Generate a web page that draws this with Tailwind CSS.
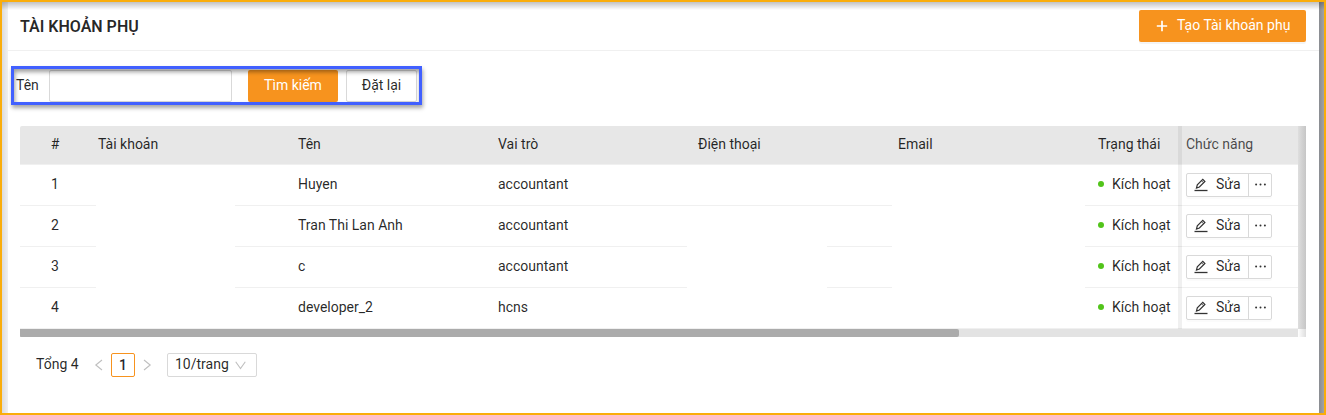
<!DOCTYPE html>
<html lang="vi">
<head>
<meta charset="utf-8">
<title>Tài khoản phụ</title>
<script src="https://cdn.jsdelivr.net/npm/@tailwindcss/browser@4"></script>
</head>
<body class="bg-white">
<div class="relative w-[1326px] h-[415px] overflow-hidden border-2 border-[#faad0a] flex font-['Roboto',sans-serif] text-sm leading-[22px] text-black/85">
  <div class="w-[6px] shrink-0 bg-linear-to-r from-[#dcdcdc] to-[#f0f0f0]"></div>
  <main class="w-[1311px] shrink-0 bg-white">
    <header class="h-[49px] border-b border-[#f0f0f0] flex items-start justify-between pl-3 pr-[13px]">
      <h1 class="text-base font-semibold leading-6 mt-[13px]">TÀI KHOẢN PHỤ</h1>
      <button class="mt-2 w-[167px] h-8 rounded-[2px] bg-[#f7931e] text-white flex items-center pl-[17px] shadow-[0_2px_0_rgba(0,0,0,0.045)]">
        <svg class="w-3 h-3 mr-[9px]" viewBox="0 0 12 12" stroke="currentColor" stroke-width="1.7"><path d="M6 .8v10.4M.8 6h10.4"/></svg>
        <span class="pb-[3px]">Tạo Tài khoản phụ</span>
      </button>
    </header>
    <form class="relative ml-[3px] mt-[15px] w-[411px] h-[39px] border-3 border-[#4160ff] flex pt-[1px] pl-[2px] shadow-[1px_3px_4px_rgba(0,0,0,0.35)]">
      <label class="w-[33px] leading-8 -mt-px">Tên</label>
      <input class="w-[183px] h-8 border border-[#d9d9d9] rounded-[2px] outline-none">
      <button type="button" class="ml-4 w-[90px] h-8 rounded-[2px] bg-[#f7931e] text-white pb-[2px]">Tìm kiếm</button>
      <button type="button" class="ml-2 w-[71px] h-8 rounded-[2px] border border-[#d9d9d9] pb-[2px]">Đặt lại</button>
      <span class="absolute inset-0 pointer-events-none shadow-[inset_1px_3px_4px_rgba(0,0,0,0.38)]"></span>
    </form>
    <section class="ml-3 mt-[21px] w-[1286px]">
      <div class="flex">
        <div class="w-[1278px] relative">
          <div class="h-[39px] bg-[#e7e7e7] border-b border-[#f0f0f0] rounded-tl-[2px] flex items-center pb-[2px]">
            <span class="w-[71px] text-center pr-px">#</span><span class="w-[200px] pl-[7px]">Tài khoản</span><span class="w-[200px] pl-[7px]">Tên</span><span class="w-[200px] pl-[7px]">Vai trò</span><span class="w-[200px] pl-[7px]">Điện thoại</span><span class="w-[200px] pl-[7px]">Email</span><span class="w-[91px] pl-[7px] whitespace-nowrap">Trạng thái</span><span class="pl-[4px] text-black/70">Chức năng</span>
          </div>
          <div id="rows"></div>
          <span class="absolute left-[1158px] top-0 w-1 h-[203px] bg-black/6"></span>
        </div>
        <div class="w-2 h-[203px] bg-linear-to-r from-[#dedede] to-[#c6c6c6]"></div>
      </div>
      <div class="flex h-2"><div class="w-[1278px] bg-[#e3e3e3]"><div class="w-[939px] h-2 rounded-r-[2px] rounded-bl-[1px] bg-[#ababab]"></div></div><div class="w-2 bg-linear-to-r from-white to-[#dedede]"></div></div>
    </section>
    <footer class="mt-4 pl-7 flex h-6 leading-[22px]">
      <span class="w-[58px]">Tổng 4</span>
      <svg class="w-[9px] h-3 mt-[6px]" viewBox="0 0 9 12" fill="none" stroke="#bfbfbf" stroke-width="1.1"><path d="M8 1L1.8 6L8 11"/></svg>
      <span class="ml-2 w-6 h-6 border border-[#f7931e] rounded-[2px] text-center font-medium">1</span>
      <svg class="w-[9px] h-3 mt-[6px] ml-2" viewBox="0 0 9 12" fill="none" stroke="#bfbfbf" stroke-width="1.1"><path d="M1 1L7.2 6L1 11"/></svg>
      <span class="ml-[15px] w-[90px] h-6 border border-[#d9d9d9] rounded-[2px] pl-[7px] flex leading-5">10/trang
        <svg class="w-[11px] h-[9px] ml-[6px] mt-[7px]" viewBox="0 0 11 9" fill="none" stroke="#bfbfbf" stroke-width="1.1"><path d="M.7.8L5.5 7.5L10.3.8"/></svg></span>
    </footer>
  </main>
  <div class="w-[5px] shrink-0 bg-linear-to-r from-[#898c91] to-[#a1a3a7]"></div>
  <span class="absolute left-0 top-0 w-full h-[8px] bg-linear-to-b from-black/24 to-transparent pointer-events-none"></span>
</div>
<script>
const data = [['Huyen','accountant'],['Tran Thi Lan Anh','accountant'],['c','accountant'],['developer_2','hcns']];
const line = 'bg-[#f0f0f0]';
const full = `<div class="flex h-px"><i class="w-[76px] ${line}"></i><i class="w-[139px]"></i><i class="w-[637px] ${line}"></i><i class="w-[20px] ${line}"></i><i class="w-[193px]"></i><i class="grow ${line}"></i></div>`;
const split = `<div class="flex h-px"><i class="w-[76px] ${line}"></i><i class="w-[139px]"></i><i class="w-[452px] ${line}"></i><i class="w-[140px]"></i><i class="w-[65px] ${line}"></i><i class="w-[193px]"></i><i class="grow ${line}"></i></div>`;
const last = `<div class="h-px bg-[#f0f0f0]"></div>`;
document.getElementById('rows').innerHTML = data.map((d, i) => `
<div class="h-10 flex items-center">
  <span class="w-[70px] text-center pb-[2px]">${i + 1}</span>
  <span class="w-[201px]"></span>
  <span class="w-[200px] pl-[7px] pb-[2px]">${d[0]}</span>
  <span class="w-[200px] pl-[7px] pb-[2px]">${d[1]}</span>
  <span class="w-[400px]"></span>
  <span class="w-[95px] pl-[7px] pb-[2px] flex items-center whitespace-nowrap"><i class="w-1.5 h-1.5 rounded-full bg-[#52c41a] mr-2"></i>Kích hoạt</span>
  <span class="flex h-6 border border-[#d9d9d9] rounded-[2px] w-[86px] shadow-[0_2px_0_rgba(0,0,0,0.016)]">
    <span class="w-[62px] pl-[7px] border-r border-[#d9d9d9] flex leading-5"><svg class="w-[14px] h-[14px] mt-1 mr-2" viewBox="0 0 14 14" fill="none" stroke="#333" stroke-width="1.2"><path d="M.5 12.5h13" stroke-width="1.3"/><path d="M2.5 10l.8-3.1L8.8 1.4l2.1 2.1L5.4 9z"/><path d="M7.5 2.7l2.1 2.1" stroke-width=".8"/></svg>Sửa</span>
    <svg class="w-[11px] h-[3px] mt-[9px] ml-[6px]" viewBox="0 0 11 3" fill="#333"><circle cx="1.1" cy="1.5" r="1"/><circle cx="5.5" cy="1.5" r="1"/><circle cx="9.9" cy="1.5" r="1"/></svg>
  </span>
</div>${i === 3 ? last : i === 0 ? full : split}`).join('');
</script>
</body>
</html>
